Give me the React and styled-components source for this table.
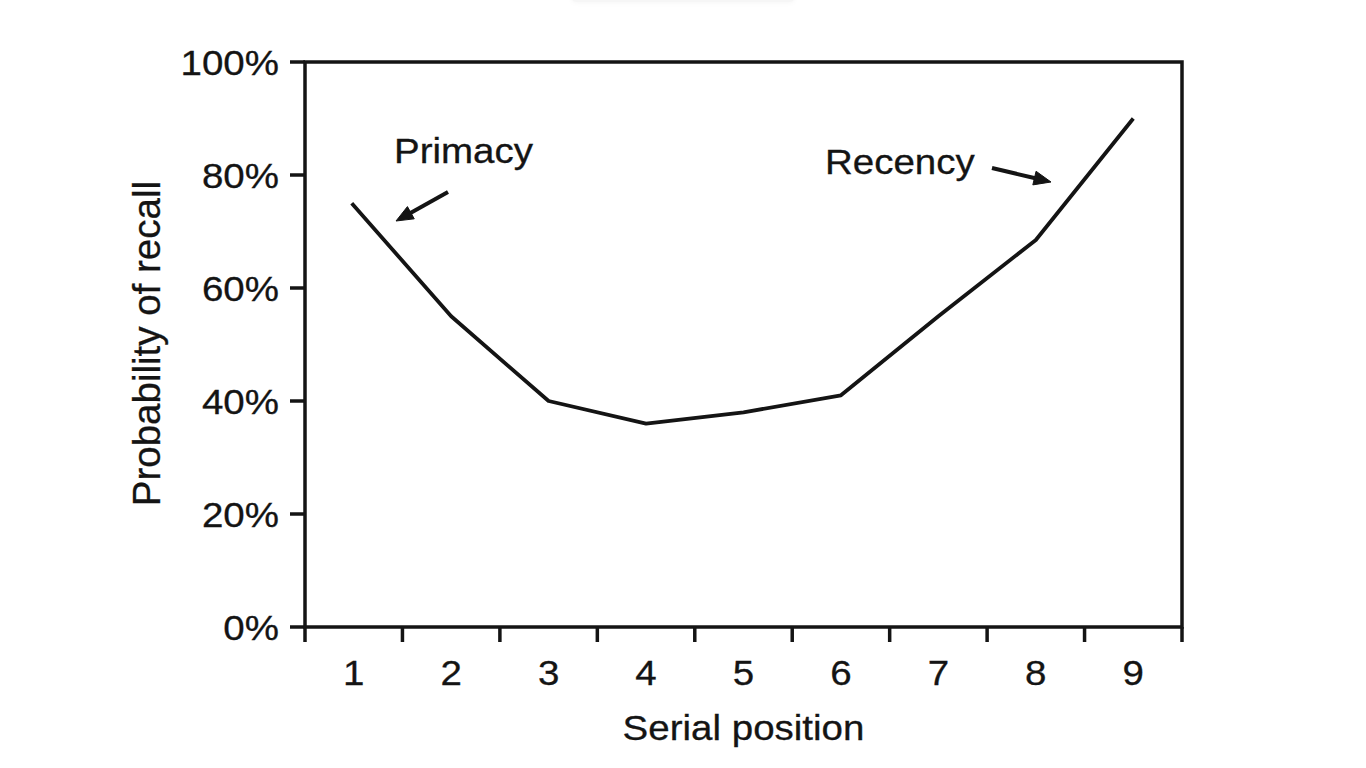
import React from "react";
import styled, { createGlobalStyle } from "styled-components";

const GlobalStyle = createGlobalStyle`
  html, body {
    margin: 0;
    padding: 0;
    background: #ffffff;
  }
  body {
    font-family: "Liberation Sans", Arial, Helvetica, sans-serif;
    color: #141414;
  }
`;

const Page = styled.div`
  position: relative;
  width: 1366px;
  height: 768px;
  overflow: hidden;
  box-sizing: border-box;
  padding: 40px 0 0 128px;
`;

const TopShade = styled.div`
  position: absolute;
  top: -6px;
  left: 572px;
  width: 222px;
  height: 8px;
  border-radius: 4px;
  background: #f6f6f6;
  box-shadow: 0 0 6px rgba(0, 0, 0, 0.05);
`;

const Figure = styled.div`
  display: grid;
  grid-template-columns: 42px 1020px;
  grid-template-rows: 660px auto;
`;

const YTitleCell = styled.div`
  box-sizing: border-box;
  padding-top: 20px;
  height: 587px;
  display: flex;
  align-items: center;
  justify-content: flex-start;
`;

const YTitle = styled.div`
  writing-mode: vertical-rl;
  transform: rotate(180deg);
  font-size: 38.5px;
  line-height: 1;
  white-space: nowrap;
  color: #141414;
  -webkit-text-stroke: 0.3px #141414;
`;

const Plot = styled.svg`
  display: block;
  width: 1020px;
  height: 660px;
  font-family: "Liberation Sans", Arial, Helvetica, sans-serif;
`;

const XTitle = styled.div`
  grid-column: 2;
  margin: 10px 0 0 135px;
  width: 877px;
  text-align: center;
  font-size: 35px;
  line-height: 1;
  transform: scaleX(1.1);
  color: #141414;
  -webkit-text-stroke: 0.3px #141414;
`;

const INK = "#141414";
const LEFT = 305;
const RIGHT = 1182;
const TOP = 62;
const BOTTOM = 627;
const STEP_X = (RIGHT - LEFT) / 9;

const yOf = (pct) => BOTTOM - ((BOTTOM - TOP) * pct) / 100;
const xOf = (pos) => LEFT + (pos - 0.5) * STEP_X;

const recall = [75, 55, 40, 36, 38, 41, 55, 68.5, 90];

const Label = ({ x, y, anchor = "start", size = 35, children }) => (
  <text
    transform={`translate(${x} ${y}) scale(1.1 1)`}
    textAnchor={anchor}
    fontSize={size}
    fill={INK}
    stroke={INK}
    strokeWidth="0.3"
  >
    {children}
  </text>
);

const Arrow = ({ from, to }) => {
  const dx = to[0] - from[0];
  const dy = to[1] - from[1];
  const len = Math.hypot(dx, dy);
  const ux = dx / len;
  const uy = dy / len;
  const head = 17;
  const half = 7;
  const bx = to[0] - ux * head;
  const by = to[1] - uy * head;
  const pts = [
    `${to[0]},${to[1]}`,
    `${bx - uy * half},${by + ux * half}`,
    `${bx + uy * half},${by - ux * half}`,
  ].join(" ");
  return (
    <g>
      <line
        x1={from[0]}
        y1={from[1]}
        x2={bx + ux * 2}
        y2={by + uy * 2}
        stroke={INK}
        strokeWidth="4"
      />
      <polygon points={pts} fill={INK} stroke={INK} strokeWidth="1" strokeLinejoin="round" />
    </g>
  );
};

const Chart = () => (
  <Plot viewBox="170 40 1020 660">
    <rect
      x={LEFT}
      y={TOP}
      width={RIGHT - LEFT}
      height={BOTTOM - TOP}
      fill="none"
      stroke={INK}
      strokeWidth="3.5"
    />
    {[0, 20, 40, 60, 80, 100].map((p) => (
      <g key={p}>
        <line
          x1={LEFT - 15}
          x2={LEFT}
          y1={yOf(p)}
          y2={yOf(p)}
          stroke={INK}
          strokeWidth="3.5"
        />
        <Label x={279} y={yOf(p) + 12.5} anchor="end">
          {p}%
        </Label>
      </g>
    ))}
    {Array.from({ length: 10 }, (_, k) => (
      <line
        key={k}
        x1={LEFT + k * STEP_X}
        x2={LEFT + k * STEP_X}
        y1={BOTTOM}
        y2={BOTTOM + 15}
        stroke={INK}
        strokeWidth="3.5"
      />
    ))}
    {recall.map((_, i) => (
      <Label key={i} x={xOf(i + 1)} y={685} anchor="middle">
        {i + 1}
      </Label>
    ))}
    <polyline
      points={recall.map((v, i) => `${xOf(i + 1) - (i === 0 ? 2 : 0)},${yOf(v)}`).join(" ")}
      fill="none"
      stroke={INK}
      strokeWidth="3.8"
      strokeLinejoin="round"
    />
    <Label x={394} y={163}>
      Primacy
    </Label>
    <Arrow from={[448, 192]} to={[396, 221]} />
    <Label x={825} y={174}>
      Recency
    </Label>
    <Arrow from={[992, 168]} to={[1051, 182]} />
  </Plot>
);

const App = () => (
  <>
    <GlobalStyle />
    <Page>
      <TopShade />
      <Figure>
        <YTitleCell>
          <YTitle>Probability of recall</YTitle>
        </YTitleCell>
        <Chart />
        <XTitle>Serial position</XTitle>
      </Figure>
    </Page>
  </>
);

export default App;
